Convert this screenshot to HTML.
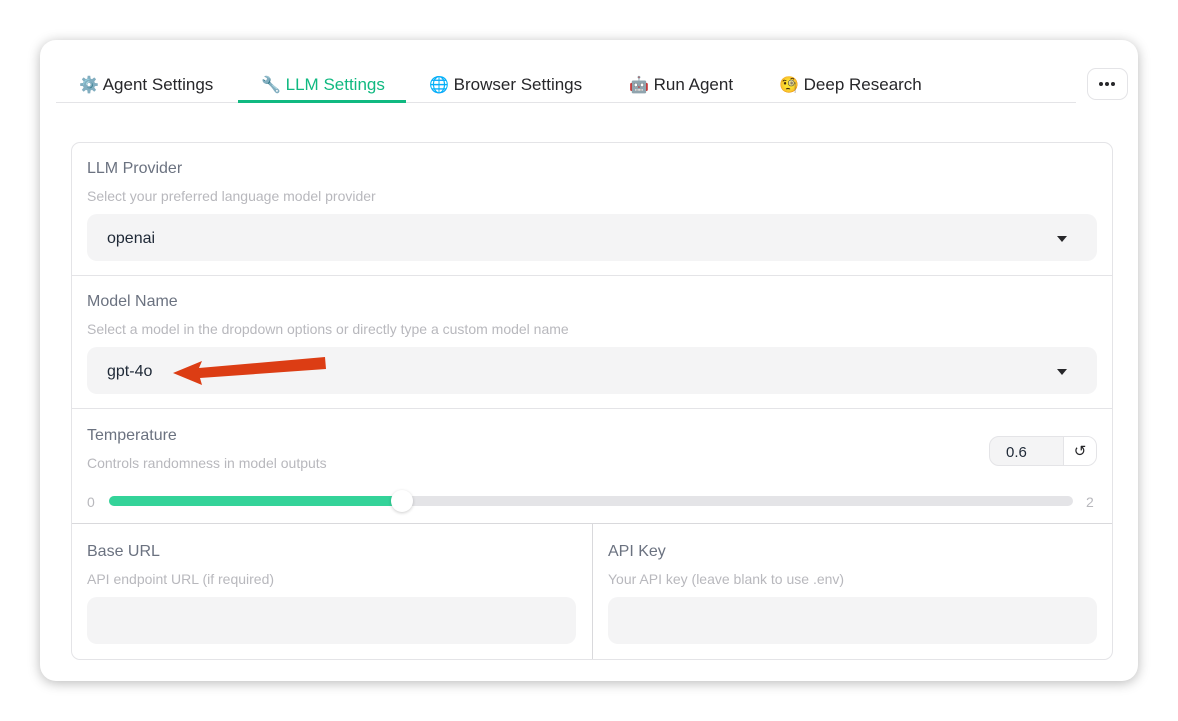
<!DOCTYPE html>
<html><head><style>
*{box-sizing:border-box;margin:0;padding:0}
body{width:1178px;height:721px;background:#fff;font-family:"Liberation Sans",sans-serif;position:relative;overflow:hidden}
.card{position:absolute;left:40px;top:40px;width:1098px;height:641px;border-radius:16px;background:#fff;box-shadow:0 2px 12px rgba(0,0,0,.28)}
.abs{position:absolute}
.tab{position:absolute;top:75px;font-size:17px;color:#27272a;white-space:nowrap}
.line{position:absolute;left:56px;top:102px;width:1020px;height:1px;background:#e4e4e7}
.panel{position:absolute;left:71px;top:142px;width:1042px;height:518px;border:1px solid #e4e4e7;border-radius:9px}
.lbl{position:absolute;font-size:16px;color:#6b7280}
.desc{position:absolute;font-size:14px;color:#b8b8bd}
.inp{position:absolute;background:#f4f4f5;border-radius:10px;height:47px}
.val{position:absolute;left:20px;top:16px;font-size:16px;color:#1f2937}
.caret{position:absolute;right:30px;top:22px;width:0;height:0;border-left:5.5px solid transparent;border-right:5.5px solid transparent;border-top:6px solid #27272a}
.hr{position:absolute;left:72px;width:1040px;height:1px;background:#e4e4e7}
</style></head><body>
<div class="card"></div>
<div class="tab" style="left:79px"><span style="font-size:16px">⚙️</span> Agent Settings</div>
<div class="tab" style="left:261px;color:#10b981"><span style="font-size:16px">🔧</span> LLM Settings</div>
<div class="tab" style="left:429px"><span style="font-size:16px">🌐</span> Browser Settings</div>
<div class="tab" style="left:629px"><span style="font-size:16px">🤖</span> Run Agent</div>
<div class="tab" style="left:779px"><span style="font-size:16px">🧐</span> Deep Research</div>
<div class="line"></div>
<div class="abs" style="left:238px;top:100px;width:168px;height:3px;background:#10b981"></div>
<div class="abs" style="left:1087px;top:68px;width:41px;height:32px;border:1px solid #e4e4e7;border-radius:9px"></div>
<div class="abs" style="left:1099px;top:82px;width:4px;height:4px;border-radius:50%;background:#27272a"></div>
<div class="abs" style="left:1105px;top:82px;width:4px;height:4px;border-radius:50%;background:#27272a"></div>
<div class="abs" style="left:1111px;top:82px;width:4px;height:4px;border-radius:50%;background:#27272a"></div>

<div class="panel"></div>
<div class="lbl" style="left:87px;top:160px">LLM Provider</div>
<div class="desc" style="left:87px;top:188px">Select your preferred language model provider</div>
<div class="inp" style="left:87px;top:214px;width:1010px"><div class="val">openai</div><div class="caret"></div></div>
<div class="hr" style="top:275px"></div>

<div class="lbl" style="left:87px;top:293px">Model Name</div>
<div class="desc" style="left:87px;top:321px">Select a model in the dropdown options or directly type a custom model name</div>
<div class="inp" style="left:87px;top:347px;width:1010px"><div class="val">gpt-4o</div><div class="caret"></div></div>
<svg class="abs" style="left:170px;top:352px" width="160" height="36"><polygon points="3,21 32,9 29,16 155,5 156,17 30,26 32,33" fill="#dc3d14"/></svg>
<div class="hr" style="top:408px"></div>

<div class="lbl" style="left:87px;top:427px">Temperature</div>
<div class="desc" style="left:87px;top:455px">Controls randomness in model outputs</div>
<div class="abs" style="left:989px;top:436px;width:108px;height:30px;border:1px solid #e4e4e7;border-radius:10px;background:#f4f4f5"></div>
<div class="abs" style="left:1063px;top:437px;width:33px;height:28px;background:#fff;border-left:1px solid #e4e4e7;border-radius:0 9px 9px 0;text-align:center;font-size:15px;line-height:30px;color:#27272a">↺</div>
<div class="abs" style="left:1006px;top:444px;font-size:15px;color:#1f2937">0.6</div>
<div class="abs" style="left:87px;top:494px;font-size:14px;color:#b8b8bd">0</div>
<div class="abs" style="left:1086px;top:494px;font-size:14px;color:#b8b8bd">2</div>
<div class="abs" style="left:109px;top:496px;width:964px;height:10px;border-radius:5px;background:#e4e4e7"></div>
<div class="abs" style="left:109px;top:496px;width:294px;height:10px;border-radius:5px;background:#34d399"></div>
<div class="abs" style="left:391px;top:490px;width:22px;height:22px;border-radius:50%;background:#fff;box-shadow:0 1px 3px rgba(0,0,0,.2)"></div>
<div class="hr" style="top:523px;background:#d9d9dc"></div>

<div class="abs" style="left:592px;top:524px;width:1px;height:135px;background:#d9d9dc"></div>
<div class="lbl" style="left:87px;top:543px">Base URL</div>
<div class="desc" style="left:87px;top:571px">API endpoint URL (if required)</div>
<div class="inp" style="left:87px;top:597px;width:489px"></div>
<div class="lbl" style="left:608px;top:543px">API Key</div>
<div class="desc" style="left:608px;top:571px">Your API key (leave blank to use .env)</div>
<div class="inp" style="left:608px;top:597px;width:489px"></div>
</body></html>
